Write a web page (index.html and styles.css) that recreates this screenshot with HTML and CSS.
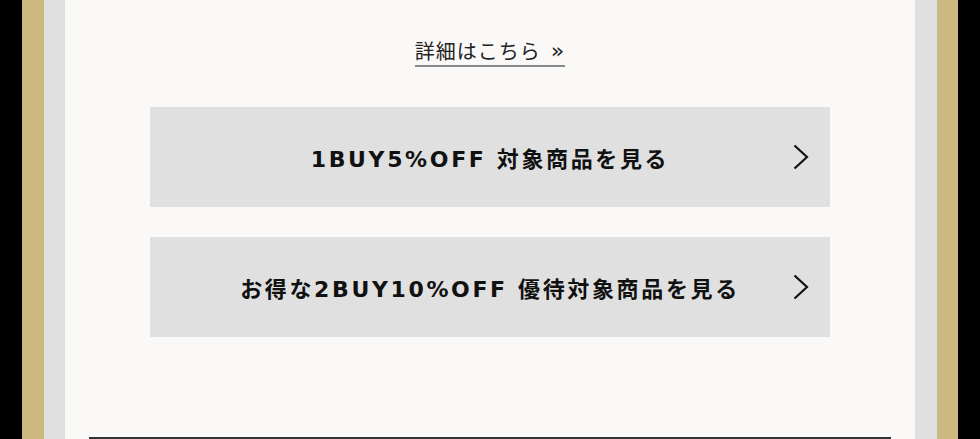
FILE: index.html
```html
<!DOCTYPE html>
<html lang="ja">
<head>
    <meta charset="UTF-8">
    <title>キャンペーン</title>
    <link rel="stylesheet" href="styles.css">
</head>
<body>
<div class="frame">
    <div class="frame-gold">
        <div class="frame-gray">
            <div class="content">
                <div class="more">
                    <a class="more-link" href="#">詳細はこちら<span class="more-arrow">»</span></a>
                </div>
                <ul class="btn-list">
                    <li>
                        <a class="btn" href="#">
                            <span class="btn-text">1BUY5%OFF 対象商品を見る</span>
                            <svg class="btn-arrow" width="16" height="26" viewBox="0 0 16 26">
                                <polyline points="1.5,1.5 14,13 1.5,24.5" fill="none" stroke="#111" stroke-width="2.2"/>
                            </svg>
                        </a>
                    </li>
                    <li>
                        <a class="btn" href="#">
                            <span class="btn-text">お得な2BUY10%OFF 優待対象商品を見る</span>
                            <svg class="btn-arrow" width="16" height="26" viewBox="0 0 16 26">
                                <polyline points="1.5,1.5 14,13 1.5,24.5" fill="none" stroke="#111" stroke-width="2.2"/>
                            </svg>
                        </a>
                    </li>
                </ul>
                <div class="divider"></div>
            </div>
        </div>
    </div>
</div>
</body>
</html>
```

FILE: styles.css
```css
*{
    margin: 0;
    padding: 0;
    box-sizing: border-box;
}
li{
    list-style: none;
}
a{
    color: inherit;
    text-decoration: none;
}
body{
    background: #000;
    font-family: "Noto Sans CJK JP", "Noto Sans", sans-serif;
    color: #111;
}
.frame{
    background: #000;
    padding: 0 22px;
}
.frame-gold{
    background: #cdb97f;
    padding: 0 21px 0 22px;
}
.frame-gray{
    background: #e0e0e0;
    padding: 0 22px 0 21px;
}
.content{
    background: #faf9f7;
    padding-top: 37px;
    height: 480px;
}
.more{
    text-align: center;
}
.more-link{
    display: inline-block;
    font-size: 20px;
    line-height: 28px;
    letter-spacing: 0.05em;
    color: #222;
    border-bottom: 2px solid #8a8a8a;
}
.more-arrow{
    display: inline-block;
    margin-left: 10px;
    font-family: "DejaVu Sans", sans-serif;
    font-size: 22px;
    line-height: 28px;
    vertical-align: top;
}
.btn-list{
    width: 680px;
    margin: 40px auto 0;
    display: flex;
    flex-direction: column;
    gap: 30px;
}
.btn{
    position: relative;
    display: flex;
    align-items: center;
    justify-content: center;
    height: 100px;
    background: #e0e0e0;
}
.btn-text{
    font-family: "DejaVu Sans", "Noto Sans CJK JP", sans-serif;
    font-size: 22px;
    font-weight: 700;
    letter-spacing: 0.12em;
}
.btn-arrow{
    position: absolute;
    right: 21px;
    top: 37px;
}
.divider{
    width: 802px;
    margin: 100px auto 0;
    border-top: 2px solid #333;
}
```
